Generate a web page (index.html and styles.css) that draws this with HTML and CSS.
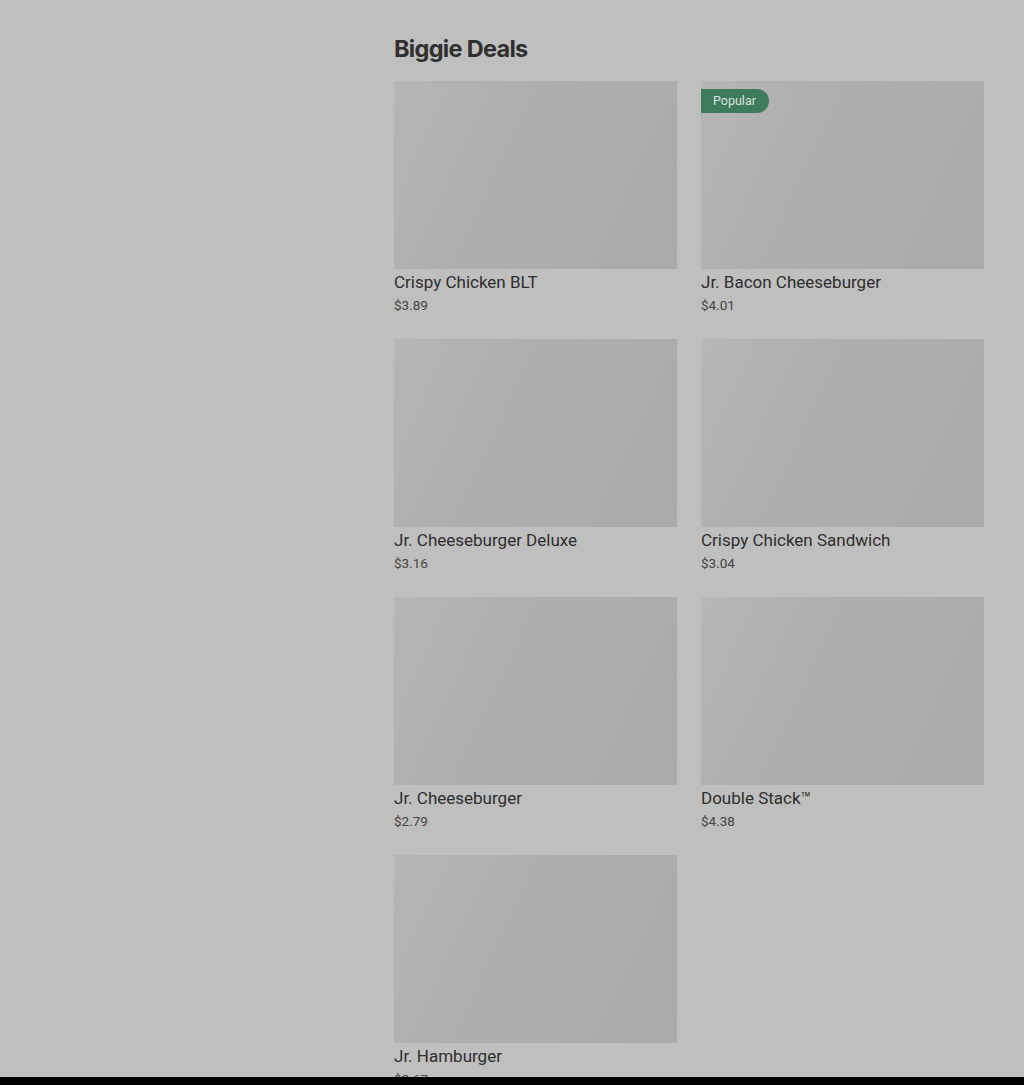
FILE: index.html
```html
<!doctype html>
<html lang="en">
  <head>
    <meta charset="UTF-8" />
    <meta name="viewport" content="width=device-width, initial-scale=1.0" />
    <title>Biggie Deals</title>
    <link rel="stylesheet" href="styles.css">
  </head>
  <body>
    <div class="page">
      <aside class="sidebar"></aside>

      <main class="menu">
        <h1>Biggie Deals</h1>

        <div class="items">
          <div class="item">
            <div class="thumb"></div>
            <div class="name">Crispy Chicken BLT</div>
            <div class="price">$3.89</div>
          </div>
          <div class="item">
            <div class="thumb"><span class="badge">Popular</span></div>
            <div class="name">Jr. Bacon Cheeseburger</div>
            <div class="price">$4.01</div>
          </div>
          <div class="item">
            <div class="thumb"></div>
            <div class="name">Jr. Cheeseburger Deluxe</div>
            <div class="price">$3.16</div>
          </div>
          <div class="item">
            <div class="thumb"></div>
            <div class="name">Crispy Chicken Sandwich</div>
            <div class="price">$3.04</div>
          </div>
          <div class="item">
            <div class="thumb"></div>
            <div class="name">Jr. Cheeseburger</div>
            <div class="price">$2.79</div>
          </div>
          <div class="item">
            <div class="thumb"></div>
            <div class="name">Double Stack™</div>
            <div class="price">$4.38</div>
          </div>
          <div class="item">
            <div class="thumb"></div>
            <div class="name">Jr. Hamburger</div>
            <div class="price">$2.67</div>
          </div>
        </div>
      </main>
    </div>

    <div class="bottom-bar"></div>
  </body>
</html>
```

FILE: styles.css
```css
body {
  margin: 0;
  background-color: #bfbfbf;
  color: #333;
  font-family: Roboto, "Liberation Sans", sans-serif;
}
.page {
  display: grid;
  grid-template-columns: 1fr 590px;
  column-gap: 40px;
  padding: 0 40px;
}
.menu {
  padding-top: 34px;
}
h1 {
  margin: 0 0 17px;
  font-family: Inter, "Liberation Sans", sans-serif;
  font-size: 23.5px;
  font-weight: 700;
  line-height: 30px;
  letter-spacing: -0.7px;
  color: #2f2f2f;
}
.items {
  display: grid;
  grid-template-columns: 1fr 1fr;
  column-gap: 24px;
  row-gap: 24px;
}
.thumb {
  position: relative;
  height: 188px;
  background: linear-gradient(115deg, #b6b6b6 0%, #adadad 45%, #ababab 100%);
}
.badge {
  position: absolute;
  top: 8px;
  left: 0;
  height: 24px;
  padding: 0 13px 0 12px;
  line-height: 24px;
  font-size: 12.5px;
  color: #d8e4dd;
  background-color: #3e7b5d;
  border-radius: 0 12px 12px 0;
}
.name {
  font-size: 17px;
  line-height: 26px;
  color: #2e2e2e;
}
.price {
  font-size: 13.5px;
  line-height: 20px;
  color: #444;
}
.bottom-bar {
  position: fixed;
  left: 0;
  right: 0;
  bottom: 0;
  height: 8px;
  background-color: #000;
}
```
